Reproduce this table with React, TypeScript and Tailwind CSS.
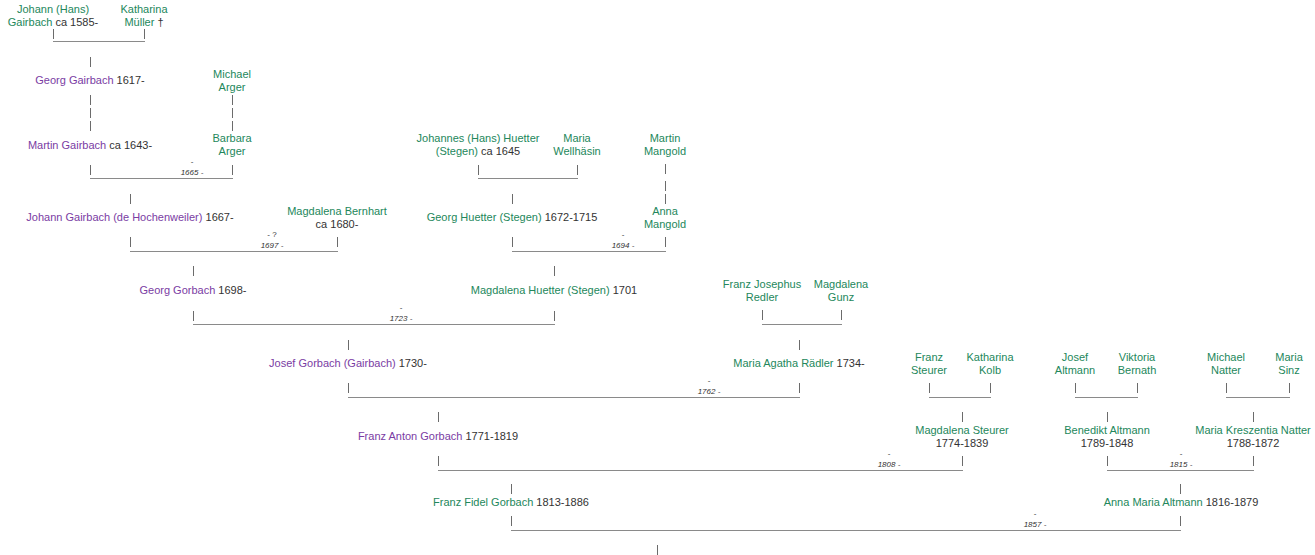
import React from 'react';

type Tone = 'g' | 'p' | 'd';
type Part = [string, Tone];

interface Person {
  x: number;
  y: number;
  lines: Part[][];
}

interface Marriage {
  x1: number;
  x2: number;
  y: number;
  at?: number;
  top?: string;
  year?: string;
}

interface Band {
  h: string;
  people: Person[];
  ticks: [number, number][];
  marriages: Marriage[];
}

const tone: Record<Tone, string> = {
  g: 'text-[#23875b]',
  p: 'text-[#7a3ca3]',
  d: 'text-[#333333]',
};

// one band per generation; x = centre of the node, y = centre of the first line (relative to the band)
const bands: Band[] = [
  {
    h: 'h-[50px]',
    people: [
      { x: 53, y: 9, lines: [[['Johann (Hans)', 'g']], [['Gairbach', 'g'], [' ca 1585-', 'd']]] },
      { x: 144, y: 9, lines: [[['Katharina', 'g']], [['Müller', 'g'], [' †', 'd']]] },
    ],
    ticks: [[53, 34], [144, 34]],
    marriages: [{ x1: 53, x2: 144, y: 41 }],
  },
  {
    h: 'h-[142px]',
    people: [
      { x: 90, y: 30, lines: [[['Georg Gairbach', 'p'], [' 1617-', 'd']]] },
      { x: 232, y: 24, lines: [[['Michael', 'g']], [['Arger', 'g']]] },
      { x: 90, y: 95, lines: [[['Martin Gairbach', 'p'], [' ca 1643-', 'd']]] },
      { x: 232, y: 88, lines: [[['Barbara', 'g']], [['Arger', 'g']]] },
      { x: 478, y: 88, lines: [[['Johannes (Hans) Huetter', 'g']], [['(Stegen)', 'g'], [' ca 1645', 'd']]] },
      { x: 577, y: 88, lines: [[['Maria', 'g']], [['Wellhäsin', 'g']]] },
      { x: 665, y: 88, lines: [[['Martin', 'g']], [['Mangold', 'g']]] },
    ],
    ticks: [
      [90, 12],
      [90, 50], [90, 63], [90, 76], [232, 50], [232, 63], [232, 76],
      [90, 120], [232, 120], [478, 120], [577, 120],
      [665, 119], [665, 136],
    ],
    marriages: [
      { x1: 90, x2: 232, y: 128, at: 192, top: '-', year: '1665 -' },
      { x1: 478, x2: 577, y: 128 },
    ],
  },
  {
    h: 'h-[73px]',
    people: [
      { x: 130, y: 25, lines: [[['Johann Gairbach (de Hochenweiler)', 'p'], [' 1667-', 'd']]] },
      { x: 337, y: 19, lines: [[['Magdalena Bernhart', 'g']], [['ca 1680-', 'd']]] },
      { x: 512, y: 25, lines: [[['Georg Huetter (Stegen)', 'g'], [' 1672-1715', 'd']]] },
      { x: 665, y: 19, lines: [[['Anna', 'g']], [['Mangold', 'g']]] },
    ],
    ticks: [[665, 7], [130, 7], [512, 7], [130, 50], [337, 50], [512, 50], [665, 50]],
    marriages: [
      { x1: 130, x2: 337, y: 59, at: 272, top: '- ?', year: '1697 -' },
      { x1: 512, x2: 665, y: 59, at: 623, top: '-', year: '1694 -' },
    ],
  },
  {
    h: 'h-[73px]',
    people: [
      { x: 193, y: 25, lines: [[['Georg Gorbach', 'p'], [' 1698-', 'd']]] },
      { x: 554, y: 25, lines: [[['Magdalena Huetter (Stegen)', 'g'], [' 1701', 'd']]] },
      { x: 762, y: 19, lines: [[['Franz Josephus', 'g']], [['Redler', 'g']]] },
      { x: 841, y: 19, lines: [[['Magdalena', 'g']], [['Gunz', 'g']]] },
    ],
    ticks: [[193, 6], [554, 6], [193, 51], [554, 51], [762, 50], [841, 50]],
    marriages: [
      { x1: 193, x2: 554, y: 59, at: 401, top: '-', year: '1723 -' },
      { x1: 762, x2: 841, y: 59 },
    ],
  },
  {
    h: 'h-[73px]',
    people: [
      { x: 348, y: 25, lines: [[['Josef Gorbach (Gairbach)', 'p'], [' 1730-', 'd']]] },
      { x: 799, y: 25, lines: [[['Maria Agatha Rädler', 'g'], [' 1734-', 'd']]] },
      { x: 929, y: 19, lines: [[['Franz', 'g']], [['Steurer', 'g']]] },
      { x: 990, y: 19, lines: [[['Katharina', 'g']], [['Kolb', 'g']]] },
      { x: 1075, y: 19, lines: [[['Josef', 'g']], [['Altmann', 'g']]] },
      { x: 1137, y: 19, lines: [[['Viktoria', 'g']], [['Bernath', 'g']]] },
      { x: 1226, y: 19, lines: [[['Michael', 'g']], [['Natter', 'g']]] },
      { x: 1289, y: 19, lines: [[['Maria', 'g']], [['Sinz', 'g']]] },
    ],
    ticks: [
      [348, 7], [799, 7],
      [348, 50], [799, 50], [929, 50], [990, 50], [1075, 50], [1137, 50], [1226, 50], [1289, 50],
    ],
    marriages: [
      { x1: 348, x2: 799, y: 59, at: 709, top: '-', year: '1762 -' },
      { x1: 929, x2: 990, y: 59 },
      { x1: 1075, x2: 1137, y: 59 },
      { x1: 1226, x2: 1289, y: 59 },
    ],
  },
  {
    h: 'h-[73px]',
    people: [
      { x: 438, y: 25, lines: [[['Franz Anton Gorbach', 'p'], [' 1771-1819', 'd']]] },
      { x: 962, y: 19, lines: [[['Magdalena Steurer', 'g']], [['1774-1839', 'd']]] },
      { x: 1107, y: 19, lines: [[['Benedikt Altmann', 'g']], [['1789-1848', 'd']]] },
      { x: 1253, y: 19, lines: [[['Maria Kreszentia Natter', 'g']], [['1788-1872', 'd']]] },
    ],
    ticks: [
      [438, 6], [962, 6], [1107, 6], [1253, 6],
      [438, 50], [962, 50], [1107, 50], [1253, 50],
    ],
    marriages: [
      { x1: 438, x2: 962, y: 59, at: 889, top: '-', year: '1808 -' },
      { x1: 1107, x2: 1253, y: 59, at: 1181, top: '-', year: '1815 -' },
    ],
  },
  {
    h: 'h-[71px]',
    people: [
      { x: 511, y: 18, lines: [[['Franz Fidel Gorbach', 'g'], [' 1813-1886', 'd']]] },
      { x: 1181, y: 18, lines: [[['Anna Maria Altmann', 'g'], [' 1816-1879', 'd']]] },
    ],
    ticks: [[511, 5], [1180, 5], [511, 37], [1180, 37], [657, 66]],
    marriages: [{ x1: 511, x2: 1180, y: 46, at: 1035, top: '-', year: '1857 -' }],
  },
];

const Generation = ({ band }: { band: Band }) => (
  <div className={`relative w-full shrink-0 ${band.h}`}>
    {band.marriages.map((m, i) => (
      <React.Fragment key={`m${i}`}>
        <div className="absolute h-px bg-[#8a8a8a]" style={{ left: m.x1, top: m.y, width: m.x2 - m.x1 + 1 }} />
        {m.year && (
          <div
            className="absolute -translate-x-1/2 whitespace-nowrap text-center text-[8px] leading-[11px] text-[#333333]"
            style={{ left: m.at, top: m.y - 22 }}
          >
            <div>{m.top}</div>
            <div className="italic">{m.year}</div>
          </div>
        )}
      </React.Fragment>
    ))}

    {band.ticks.map(([x, y], i) => (
      <div key={`t${i}`} className="absolute w-px h-[10px] bg-[#6b6b6b]" style={{ left: x, top: y - 5 }} />
    ))}

    {band.people.map((p, i) => (
      <div
        key={`p${i}`}
        className="absolute -translate-x-1/2 whitespace-nowrap text-center text-[11px] leading-[13px]"
        style={{ left: p.x, top: p.y - 6.5 }}
      >
        {p.lines.map((line, j) => (
          <div key={j}>
            {line.map(([t, c], k) => (
              <span key={k} className={tone[c]}>
                {t}
              </span>
            ))}
          </div>
        ))}
      </div>
    ))}
  </div>
);

const App = () => {
  return (
    <div className="flex flex-col w-[1315px] h-[555px] overflow-hidden bg-white font-['Liberation_Sans',Arial,sans-serif]">
      {bands.map((b, i) => (
        <Generation key={i} band={b} />
      ))}
    </div>
  );
};

export default App;
